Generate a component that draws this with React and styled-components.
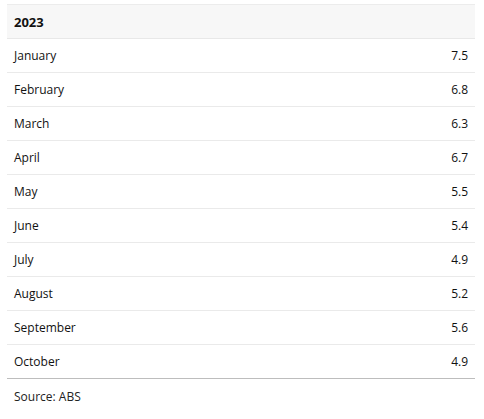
import React from 'react';
import styled, { createGlobalStyle } from 'styled-components';

const GlobalStyle = createGlobalStyle`
  body {
    margin: 0;
    background: #fff;
    font-family: "Open Sans", "DejaVu Sans", sans-serif;
    color: #111;
  }
`;

const Wrapper = styled.div`
  padding: 4px 9px 0 7px;
`;

const Table = styled.table`
  width: 100%;
  border-collapse: collapse;
  font-size: 12px;
  border-top: 1px solid #ececec;
  border-bottom: 1px solid #bdbdbd;
`;

const HeadCell = styled.th`
  background: #f7f7f7;
  text-align: left;
  font-weight: 700;
  font-size: 13px;
  height: 33px;
  padding: 0 7px;
  border-bottom: 1px solid #e8e8e8;
`;

const Row = styled.tr`
  border-bottom: ${(p) => (p.$last ? 'none' : '1px solid #eaeaea')};
`;

const Cell = styled.td`
  height: 33px;
  padding: 0 7px;
  text-align: ${(p) => (p.$num ? 'right' : 'left')};
`;

const Source = styled.div`
  font-size: 12px;
  padding: 9px 7px;
  color: #222;
`;

const data = [
  ['January', '7.5'],
  ['February', '6.8'],
  ['March', '6.3'],
  ['April', '6.7'],
  ['May', '5.5'],
  ['June', '5.4'],
  ['July', '4.9'],
  ['August', '5.2'],
  ['September', '5.6'],
  ['October', '4.9'],
];

export default function App() {
  return (
    <>
      <GlobalStyle />
      <Wrapper>
        <Table>
          <thead>
            <tr>
              <HeadCell colSpan={2}>2023</HeadCell>
            </tr>
          </thead>
          <tbody>
            {data.map(([month, value], i) => (
              <Row key={month} $last={i === data.length - 1}>
                <Cell>{month}</Cell>
                <Cell $num>{value}</Cell>
              </Row>
            ))}
          </tbody>
        </Table>
        <Source>Source: ABS</Source>
      </Wrapper>
    </>
  );
}
